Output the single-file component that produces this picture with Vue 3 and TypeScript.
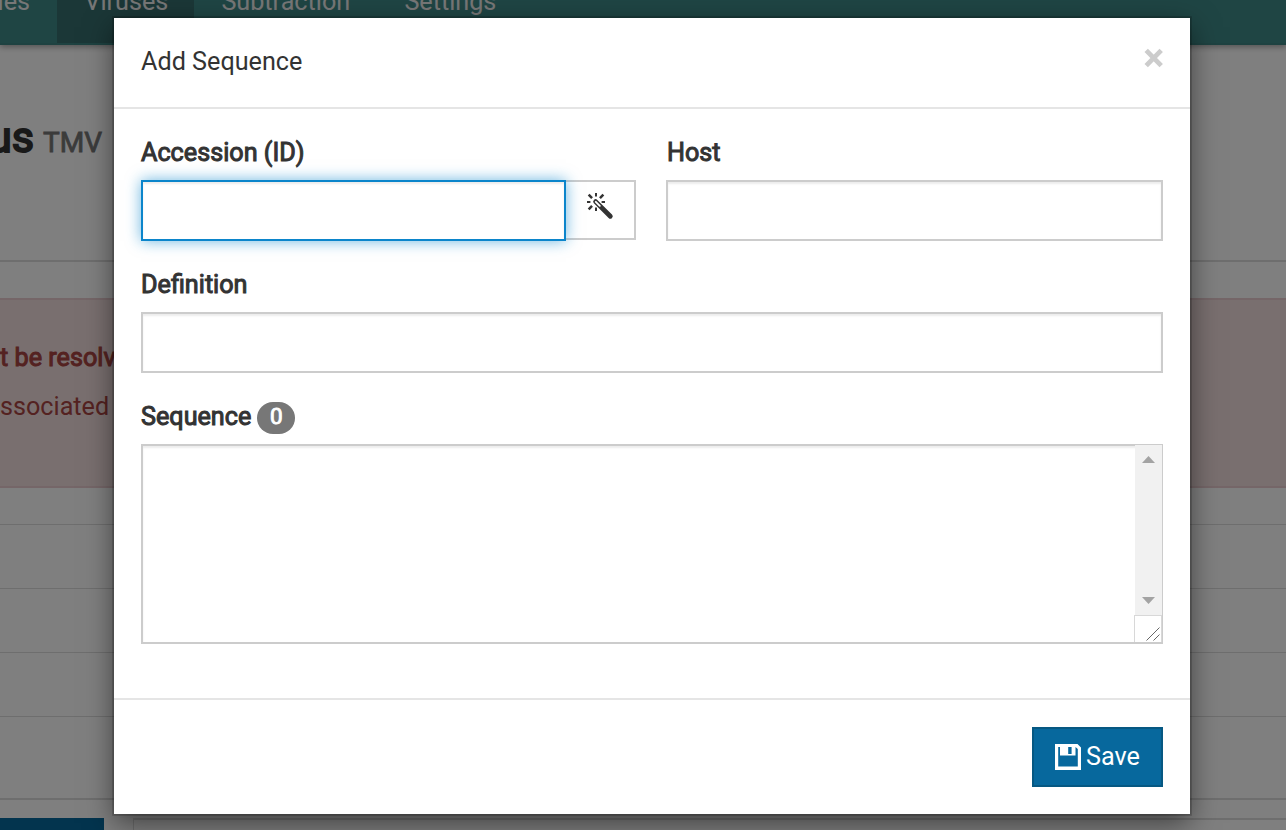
<script setup lang="ts">
import { ref, computed, onMounted } from 'vue'

const navItems = [
  { label: 'Samples', key: 'samples', active: false },
  { label: 'Viruses', key: 'viruses', active: true },
  { label: 'Subtraction', key: 'subtraction', active: false },
  { label: 'Settings', key: 'settings', active: false },
]
const rows = [1, 2, 3]
const rays = [0, 45, 90, 135, 180, 225, 270, 315]

const accession = ref('')
const host = ref('')
const definition = ref('')
const sequence = ref('')
const sequenceLength = computed(() => sequence.value.length)
const accessionInput = ref<HTMLInputElement | null>(null)

onMounted(() => accessionInput.value?.focus())
</script>

<template>
  <div class="app">
    <div class="page">
      <nav class="nav">
        <a v-for="item in navItems" :key="item.key" :class="['nav-item', item.key, { active: item.active }]"><span>{{ item.label }}</span></a>
      </nav>
      <h1 class="heading"><strong>us</strong><small>TMV</small></h1>
      <section class="alert">
        <p class="strong">t be resolved</p>
        <p>ssociated</p>
      </section>
      <div class="rows">
        <div v-for="row in rows" :key="row" class="row"></div>
        <div class="row last"></div>
      </div>
      <div class="bottom">
        <div class="blue"></div>
        <div class="panel"></div>
      </div>
    </div>

    <div class="backdrop">
      <div class="modal">
        <header class="modal-header">
          <span class="title">Add Sequence</span>
          <svg class="close" width="20" height="20" viewBox="0 0 20 20"><path d="M2.2 2.4 17.2 17.6M17.2 2.4 2.2 17.6" stroke="#ccc" stroke-width="4.8" /></svg>
        </header>
        <div class="modal-body">
          <div class="columns">
            <div class="accession">
              <label class="label">Accession (ID)</label>
              <div class="group">
                <input ref="accessionInput" v-model="accession" class="input focused" />
                <button class="wand">
                  <svg width="28" height="28" viewBox="0 0 28 28">
                    <g stroke="#333">
                      <path v-for="a in rays" :key="a" :stroke-width="a % 90 ? 2.5 : 2" :d="a % 90 ? 'M0 -5.6V-10.4' : 'M0 -5.6V-9'" :transform="`translate(10 10) rotate(${a})`" />
                    </g>
                    <path d="M9.6 9.6 24.3 24.3" stroke="#333" stroke-width="4.8" stroke-linecap="round" />
                    <path d="M9.8 9.8 13.8 13.8" stroke="#fff" stroke-width="1.9" stroke-linecap="round" />
                  </svg>
                </button>
              </div>
            </div>
            <div class="host">
              <label class="label">Host</label>
              <input v-model="host" class="input" />
            </div>
          </div>
          <div class="field">
            <label class="label">Definition</label>
            <input v-model="definition" class="input" />
          </div>
          <div class="field">
            <label class="label">Sequence<span class="badge">{{ sequenceLength }}</span></label>
            <div class="area">
              <textarea v-model="sequence" class="text"></textarea>
              <div class="scroll">
                <div class="track">
                  <svg width="13" height="7" viewBox="0 0 13 7"><path d="M0 7 6.5 0 13 7Z" fill="#a3a3a3" /></svg>
                  <svg width="13" height="7" viewBox="0 0 13 7"><path d="M0 0 6.5 7 13 0Z" fill="#a3a3a3" /></svg>
                </div>
                <div class="corner">
                  <svg width="14" height="14" viewBox="0 0 14 14"><path d="M.5 13.5 13.5 .5M7.5 13.5 13.5 7.5" stroke="#666" stroke-width="1" /></svg>
                </div>
              </div>
            </div>
          </div>
        </div>
        <footer class="modal-footer">
          <button class="save">
            <svg width="26" height="26" viewBox="0 0 26 26">
              <path fill="#fff" fill-rule="evenodd" d="M0 0H22.5L26 3.5V26H0ZM3.2 3V22.6H22.8V5L20.5 3V11.5H5V3ZM13.2 3V10H16.6V3Z" />
            </svg>
            <span>Save</span>
          </button>
        </footer>
      </div>
    </div>
  </div>
</template>

<style>
body {
  overflow: hidden;
}
</style>

<style scoped>
* {
  box-sizing: border-box;
}
.app {
  position: relative;
  width: 1286px;
  height: 830px;
  overflow: hidden;
  background: #fff;
  color: #333;
  font: 25.2px/34px Roboto, sans-serif;
}
.page {
  display: flex;
  flex-direction: column;
  height: 830px;
}
.nav {
  display: flex;
  flex: none;
  height: 45px;
  background: #3e8a88;
  border-bottom: 2px solid #3c8583;
  box-shadow: 0 2px 6px rgba(0, 0, 0, 0.35);
  color: #eee;
}
.nav-item {
  flex: none;
  height: 43px;
  padding-left: 27.4px;
  line-height: 32px;
}
.nav-item span {
  display: block;
  margin-top: -14px;
}
.samples {
  display: flex;
  justify-content: flex-end;
  width: 57px;
  padding: 0 27px 0 0;
}
.viruses {
  width: 137px;
}
.subtraction {
  width: 183px;
}
.active {
  background: #366e6e;
}
.heading {
  display: flex;
  align-items: baseline;
  flex: none;
  height: 217px;
  margin: 0;
  padding-top: 68px;
  border-bottom: 2px solid #ddd;
  font-size: 43.2px;
  line-height: 50px;
  font-weight: 400;
}
.heading strong {
  display: flex;
  justify-content: flex-end;
  width: 34px;
  font-weight: 400;
  -webkit-text-stroke: 2px #333;
}
.heading small {
  margin-left: 9px;
  font-size: 28.08px;
  color: #777;
  -webkit-text-stroke: 0.8px #777;
}
.alert {
  flex: none;
  height: 190px;
  margin-top: 36px;
  padding-top: 41px;
  background: #f2dede;
  border: solid #ebccd1;
  border-width: 2px 0;
  color: #a94442;
}
.alert p {
  margin: 0 0 15px;
}
.alert .strong {
  -webkit-text-stroke: 1px #a94442;
}
.rows {
  flex: none;
  margin-top: 36px;
  border-top: 1px solid #ddd;
}
.row {
  height: 64px;
  border-bottom: 1px solid #ddd;
}
.row.last {
  height: 83px;
  border-bottom: 2px solid #ddd;
}
.bottom {
  display: flex;
  flex: none;
  gap: 29px;
  height: 12px;
  margin-top: 18px;
}
.blue {
  width: 104px;
  background: #07689d;
}
.panel {
  flex: 1;
  border: solid #ddd;
  border-width: 2px 0 0 1px;
}
.backdrop {
  position: absolute;
  inset: 0;
  padding: 18px 96px 16px 114px;
  background: rgba(0, 0, 0, 0.5);
}
.modal {
  display: flex;
  flex-direction: column;
  height: 796px;
  background: #fff;
  box-shadow: 0 0 0 1.8px rgba(0, 0, 0, 0.2), 0 9px 27px rgba(0, 0, 0, 0.5);
}
.modal-header {
  display: flex;
  justify-content: space-between;
  flex: none;
  height: 91px;
  padding: 27px 26px 27px 27px;
  border-bottom: 2px solid #e5e5e5;
}
.close {
  margin-top: 3px;
}
.modal-body {
  flex: 1;
  padding: 27px;
}
.columns {
  display: flex;
  gap: 30px;
}
.accession {
  width: 495px;
}
.host {
  flex: 1;
}
.label {
  display: flex;
  align-items: flex-start;
  height: 32px;
  margin-bottom: 12px;
  -webkit-text-stroke: 1px #333;
}
.host .label {
  padding-left: 1px;
}
.badge {
  width: 38px;
  height: 32px;
  margin: 2px 0 0 6px;
  border-radius: 16px;
  background: #777;
  color: #fff;
  font-size: 22.5px;
  line-height: 28px;
  text-align: center;
  -webkit-text-stroke: 0.9px #fff;
}
.input {
  display: block;
  width: 100%;
  height: 61px;
  padding: 12px 24px;
  border: 2px solid #ccc;
  border-radius: 0;
  outline: none;
  background: #fff;
  box-shadow: inset 0 2px 2px rgba(0, 0, 0, 0.075);
  font: inherit;
  caret-color: transparent;
}
.group {
  display: flex;
}
.focused {
  position: relative;
  width: 425px;
  border-color: #0b85cb;
  box-shadow: inset 0 2px 2px rgba(0, 0, 0, 0.075), 0 0 14px rgba(11, 133, 203, 0.6);
}
.wand {
  display: flex;
  width: 72px;
  height: 60px;
  margin-left: -2px;
  padding: 10px 0 0 20px;
  border: 2px solid #ccc;
  background: #fff;
}
.field {
  margin-top: 27px;
}
.area {
  display: flex;
  height: 200px;
  border: 2px solid #ccc;
  box-shadow: inset 0 2px 2px rgba(0, 0, 0, 0.075);
}
.text {
  flex: 1;
  padding: 12px 24px;
  border: 0;
  outline: 0;
  resize: none;
  background: transparent;
  font: inherit;
}
.scroll {
  display: flex;
  flex-direction: column;
  width: 28px;
  margin: -1px -1px 0 0;
}
.track {
  display: flex;
  flex: 1;
  flex-direction: column;
  align-items: center;
  justify-content: space-between;
  margin-left: 1px;
  padding: 11px 0;
  background: #f1f1f1;
}
.corner {
  height: 27px;
  padding: 11px 0 0 11px;
  border: 1px solid #d8d8d8;
  border-bottom: 0;
  background: #fff;
}
.corner svg,
.wand svg,
.save svg {
  display: block;
}
.modal-footer {
  display: flex;
  justify-content: flex-end;
  flex: none;
  height: 116px;
  padding: 27px;
  border-top: 2px solid #e5e5e5;
}
.save {
  display: flex;
  align-items: center;
  gap: 5px;
  width: 131px;
  height: 60px;
  padding: 0 0 0 21px;
  border: 2px solid #065882;
  background: #07689d;
  color: #fff;
  font: inherit;
}
.save span {
  margin-top: -1px;
}
</style>
